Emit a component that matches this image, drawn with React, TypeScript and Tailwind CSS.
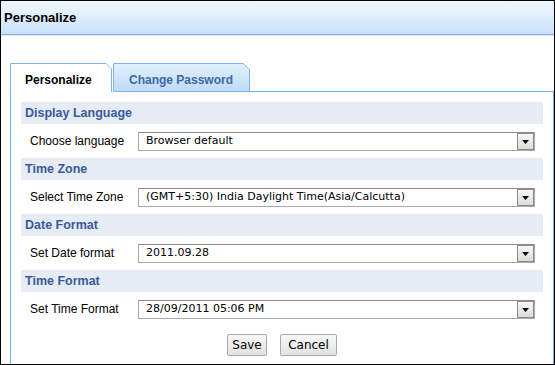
import React from "react";

const sans = { fontFamily: '"Liberation Sans", Arial, sans-serif' };
const verd = { fontFamily: '"DejaVu Sans", Verdana, sans-serif' };

function Select({ value }: { value: string }) {
  return (
    <div className="flex h-[19px] w-[397px] items-stretch border border-[#a5a9ad] border-t-[#8c9094] bg-white">
      <div className="flex flex-1 items-center pl-[7px] text-[11px] text-black" style={verd}>
        {value}
      </div>
      <div className="flex w-[17px] items-center justify-center border border-[#8a8a8a] bg-gradient-to-b from-[#f7f7f7] to-[#dcdcdc]">
        <svg width="7" height="4" viewBox="0 0 7 4">
          <path d="M0 0 H7 L3.5 4 Z" fill="#000" />
        </svg>
      </div>
    </div>
  );
}

function Section({ title, label, value }: { title: string; label: string; value: string }) {
  return (
    <div className="flex flex-col">
      <div
        className="flex h-[22px] items-center bg-[#e6ebf4] pl-[4px] text-[12.5px] font-bold text-[#3b5a9c]"
        style={sans}
      >
        {title}
      </div>
      <div className="flex h-[34px] items-start pt-[8px]">
        <div className="w-[117px] pl-[9px] text-[12px] leading-[19px] text-black" style={sans}>
          {label}
        </div>
        <Select value={value} />
      </div>
    </div>
  );
}

export default function App() {
  return (
    <div className="flex h-[365px] w-[555px] flex-col overflow-hidden border border-black bg-white">
      <div
        className="flex h-[34px] shrink-0 items-center border-b border-[#7fb1e3] bg-gradient-to-b from-[#f2f8fe] to-[#c9e2fb] pl-[3px] text-[13px] font-bold text-black"
        style={sans}
      >
        Personalize
      </div>
      <div className="h-[1px] shrink-0 bg-[#e4e4e4]" />
      <div className="flex flex-1 flex-col pl-[9px] pt-[27px]">
        <div className="flex w-[544px] flex-1 flex-col">
          <div className="flex h-[29px] shrink-0">
            <div className="relative h-[29px] w-[103px]">
              <svg className="absolute inset-0" width="103" height="29" viewBox="0 0 103 29">
                <path d="M0.5 29 V0.5 H96 L101.5 6 V29" fill="#fff" stroke="#7ab6ec" />
              </svg>
              <div
                className="relative flex h-full items-center pl-[15px] pt-[4px] text-[12px] font-bold text-black"
                style={sans}
              >
                Personalize
              </div>
            </div>
            <div className="relative h-[29px] w-[137px]">
              <svg className="absolute inset-0" width="137" height="29" viewBox="0 0 137 29">
                <defs>
                  <linearGradient id="tg" x1="0" y1="0" x2="0" y2="1">
                    <stop offset="0" stopColor="#e3f0fd" />
                    <stop offset="1" stopColor="#bedbf7" />
                  </linearGradient>
                </defs>
                <path d="M0.5 28.5 V0.5 H130 L136.5 6.5 V28.5 Z" fill="url(#tg)" stroke="#7ab6ec" />
              </svg>
              <div
                className="relative flex h-full items-center pl-[16px] pt-[4px] text-[12px] font-bold text-[#3d68a8]"
                style={sans}
              >
                Change Password
              </div>
            </div>
            <div className="flex-1 border-b border-[#6aaeea]" />
          </div>
          <div className="flex flex-1 flex-col border-l border-r border-[#6aaeea] px-[10px] pt-[10px]">
            <Section title="Display Language" label="Choose language" value="Browser default" />
            <Section
              title="Time Zone"
              label="Select Time Zone"
              value="(GMT+5:30) India Daylight Time(Asia/Calcutta)"
            />
            <Section title="Date Format" label="Set Date format" value="2011.09.28" />
            <Section title="Time Format" label="Set Time Format" value="28/09/2011 05:06 PM" />
            <div className="mt-[8px] flex justify-center gap-[13px]">
              <button
                className="h-[22px] w-[40px] rounded-[2px] border border-[#a8a8a8] bg-gradient-to-b from-[#f8f8f8] to-[#e2e2e2] text-[12px] text-black"
                style={verd}
              >
                Save
              </button>
              <button
                className="h-[22px] w-[57px] rounded-[2px] border border-[#a8a8a8] bg-gradient-to-b from-[#f8f8f8] to-[#e2e2e2] text-[12px] text-black"
                style={verd}
              >
                Cancel
              </button>
            </div>
          </div>
        </div>
      </div>
    </div>
  );
}
